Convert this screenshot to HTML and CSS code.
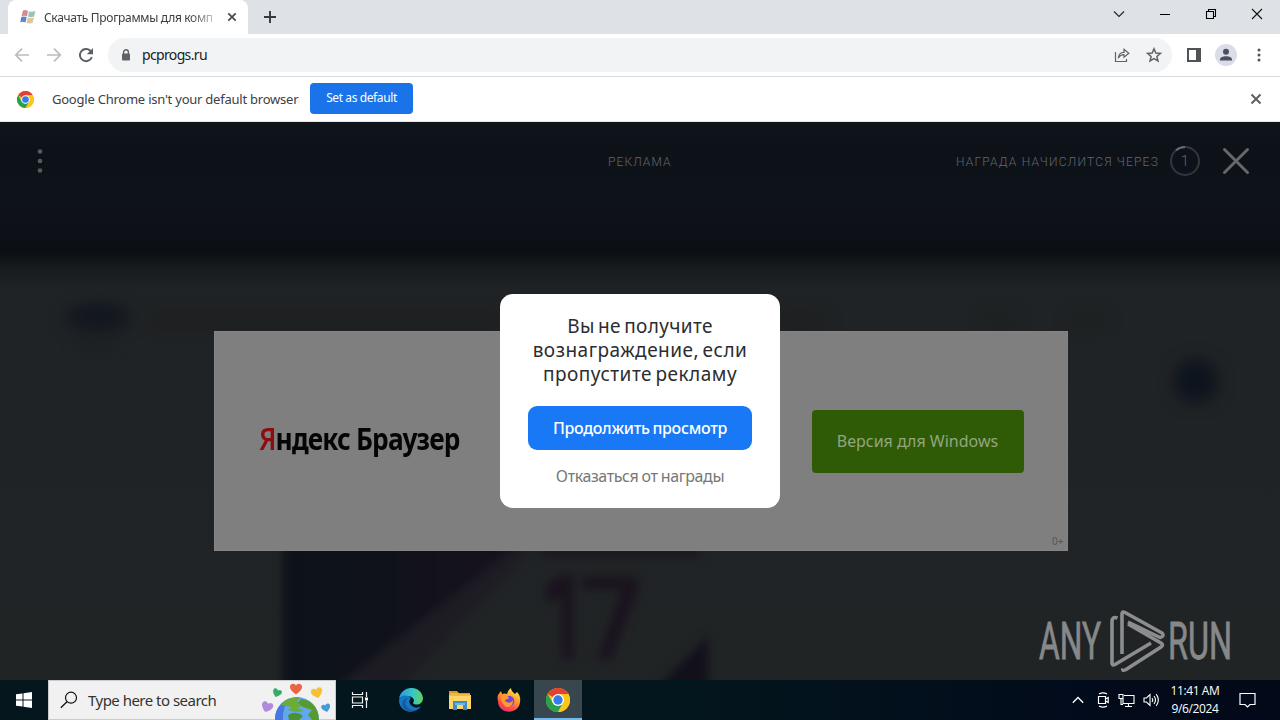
FILE: index.html
```html
<!DOCTYPE html>
<html lang="ru">
<head>
<meta charset="utf-8">
<title>pcprogs.ru</title>
<link rel="stylesheet" href="styles.css">
</head>
<body>
<header class="tabstrip">
  <div class="tab">
    <svg class="favicon" width="16" height="16" viewBox="0 0 16 16"><path d="M3 1.500Q5.500 .5 8 2L7 7.500Q4.500 6 1.500 7.200Z" fill="#d58a92"/><path d="M9 2.300Q12 3.500 15.500 2L14 7.500Q11 9 8 7.500Z" fill="#9cc3b0"/><path d="M1.300 8Q4 7 6.700 8.300L5.500 13.500Q3 12 .3 13.300Z" fill="#5c83cf"/><path d="M7.800 8.500Q11 10 14 8.500L12.500 14Q9 15 6.500 13.700Z" fill="#dfc4a0"/></svg>
    <span class="tab-title">Скачать Программы для комп</span>
    <svg class="tab-close" width="10" height="10" viewBox="0 0 10 10"><path d="M1.300 1.300L8.700 8.700M8.700 1.300L1.300 8.700" stroke="#45494d" stroke-width="1.700"/></svg>
  </div>
  <svg class="new-tab" width="14" height="14" viewBox="0 0 14 14"><path d="M7 1V13M1 7H13" stroke="#35383c" stroke-width="1.900"/></svg>
  <div class="window-buttons">
    <svg width="12" height="12" viewBox="0 0 12 12"><path d="M1 3.500L6 8.500L11 3.500" fill="none" stroke="#222" stroke-width="1.100"/></svg>
    <svg width="12" height="12" viewBox="0 0 12 12"><path d="M1 6.500H11" stroke="#000"/></svg>
    <svg width="12" height="12" viewBox="0 0 12 12"><path d="M1.500 3.500H8.500V10.500H1.500ZM3.500 3V1.500H10.500V8.500H9" fill="none" stroke="#000" stroke-width="1.100"/></svg>
    <svg width="12" height="12" viewBox="0 0 12 12"><path d="M1 1L11 11M11 1L1 11" stroke="#111" stroke-width="1.100"/></svg>
  </div>
</header>

<nav class="toolbar">
  <div class="nav-buttons">
    <svg width="16" height="16" viewBox="0 0 16 16"><path d="M15 8H2M8 1.700L1.700 8L8 14.300" fill="none" stroke="#babcbe" stroke-width="1.700"/></svg>
    <svg width="16" height="16" viewBox="0 0 16 16"><path d="M1 8H14M8 1.700L14.300 8L8 14.300" fill="none" stroke="#babcbe" stroke-width="1.700"/></svg>
    <svg width="16" height="16" viewBox="0 0 16 16"><path d="M13.800 10A6.100 6.100 0 1 1 12.300 3.700L13.500 5" fill="none" stroke="#5b5e61" stroke-width="1.900"/><path d="M15 1V7.200H8.800Z" fill="#5b5e61"/></svg>
  </div>
  <div class="omnibox">
    <svg class="lock" width="10" height="12" viewBox="0 0 10 12"><path d="M2.600 5V3.200a2.400 2.400 0 0 1 4.800 0V5" fill="none" stroke="#5f6368" stroke-width="1.400"/><rect x="1" y="4.500" width="8" height="7" rx="1" fill="#5f6368"/></svg>
    <span class="url">pcprogs.ru</span>
    <svg class="share" width="16" height="16" viewBox="0 0 16 16"><path d="M1.500 5V14.500H12.500V12M4.300 11.300C4.600 7.300 7 5.300 10 5.300V2.300L14.800 6.300L10 10.300V7.700C7.500 7.700 5.700 8.800 4.300 11.300Z" fill="none" stroke="#5f6368" stroke-width="1.200"/></svg>
    <svg width="16" height="16" viewBox="0 0 16 16"><path d="M8 1.800L9.800 6L14.400 6.400L10.900 9.400L12 13.900L8 11.500L4 13.900L5.100 9.400L1.600 6.400L6.200 6Z" fill="none" stroke="#5f6368" stroke-width="1.500"/></svg>
  </div>
  <svg class="panel" width="14" height="14" viewBox="0 0 14 14"><path d="M1 1H13V13H1Z" fill="none" stroke="#505356" stroke-width="2"/><path d="M9 1H14V13H9Z" fill="#505356"/></svg>
  <svg class="profile" width="22" height="22" viewBox="0 0 22 22"><circle cx="11" cy="11" r="11" fill="#dadce8"/><circle cx="11" cy="7.700" r="3" fill="#4b4f63"/><path d="M5 16.500V15.500C5 11 17 11 17 15.500V16.500Z" fill="#4b4f63"/></svg>
  <svg class="menu" width="4" height="14" viewBox="0 0 4 14"><g fill="#4f5256"><circle cx="2" cy="2" r="1.500"/><circle cx="2" cy="7" r="1.500"/><circle cx="2" cy="12" r="1.500"/></g></svg>
</nav>

<section class="infobar">
  <svg width="17" height="17" viewBox="0 0 24 24"><use href="#chrome-logo"/></svg>
  <span class="infobar-text">Google Chrome isn't your default browser</span>
  <button class="set-default"><span>Set as default</span></button>
  <svg class="infobar-close" width="12" height="12" viewBox="0 0 12 12"><path d="M1.500 1.500L10.500 10.500M10.500 1.500L1.500 10.500" stroke="#5b5e61" stroke-width="1.900"/></svg>
</section>

<main class="page">
  <svg class="backdrop" width="1280" height="558" viewBox="0 122 1280 558">
    <defs>
      <linearGradient id="shade" x1="0" y1="122" x2="0" y2="680" gradientUnits="userSpaceOnUse">
        <stop offset="0" stop-color="#10141b"/><stop offset=".04" stop-color="#0d1219"/><stop offset=".15" stop-color="#0e1219"/><stop offset=".235" stop-color="#0c0f15"/><stop offset=".265" stop-color="#191c1e"/><stop offset=".3" stop-color="#202325"/><stop offset="1" stop-color="#212425"/>
      </linearGradient>
      <linearGradient id="cover" x1="0" x2="1"><stop offset="0" stop-color="#0d121a"/><stop offset=".35" stop-color="#0f121a"/><stop offset=".6" stop-color="#14121c"/><stop offset="1" stop-color="#16121c"/></linearGradient>
      <filter id="soft" x="-50%" y="-50%" width="200%" height="200%" color-interpolation-filters="sRGB"><feGaussianBlur stdDeviation="8"/></filter>
      <filter id="soft-small" x="-50%" y="-50%" width="200%" height="200%" color-interpolation-filters="sRGB"><feGaussianBlur stdDeviation="5"/></filter>
    </defs>
    <rect y="122" width="1280" height="558" fill="url(#shade)"/>
    <g filter="url(#soft)">
      <ellipse cx="98" cy="317" rx="33" ry="14" fill="#12171f"/>
      <ellipse cx="95" cy="345" rx="18" ry="6" fill="#1b1f22"/>
      <rect x="150" y="316" width="350" height="8" fill="#1a1c1d"/>
      <rect x="780" y="316" width="45" height="8" fill="#1a1c1d"/>
      <rect x="985" y="316" width="30" height="8" fill="#1a1d1e"/>
      <rect x="1070" y="316" width="35" height="8" fill="#1a1d1e"/>
      <circle cx="1196" cy="381" r="22" fill="#0d141d"/>
    </g>
    <g filter="url(#soft-small)">
      <path d="M283 520H550L335 690H283Z" fill="url(#cover)"/>
      <path d="M525 539H540L400 690H330Z" fill="#1c1923" opacity=".7"/>
      <path d="M546 585L564 574H573V660H562V596L548 604ZM582 577H638V590L611 660H597L622 589H582Z" fill="#1a131f"/>
      <path d="M540 549H700V556H540Z" fill="#17151b"/>
      <path d="M708 636V690H655Z" fill="#12101b"/>
    </g>
  </svg>

  <div class="ad-header">
    <svg width="6" height="24" viewBox="0 0 6 24"><g fill="#56595e"><circle cx="3" cy="2.500" r="2.300"/><circle cx="3" cy="12" r="2.300"/><circle cx="3" cy="21.500" r="2.300"/></g></svg>
    <span class="ad-label">РЕКЛАМА</span>
    <div class="reward">
      <span class="reward-text">НАГРАДА НАЧИСЛИТСЯ ЧЕРЕЗ</span>
      <span class="counter"><svg width="30" height="30" viewBox="0 0 30 30"><circle cx="15" cy="15" r="14" fill="none" stroke="#33373d" stroke-width="2"/><path d="M6 4.300A14 14 0 0 1 15 1" fill="none" stroke="#686b70" stroke-width="2"/></svg><b>1</b></span>
      <svg width="28" height="28" viewBox="0 0 28 28"><path d="M2.500 2.500L25.500 25.500M25.500 2.500L2.500 25.500" stroke="#66686c" stroke-width="3" stroke-linecap="round"/></svg>
    </div>
  </div>

  <div class="ad-area">
    <div class="banner">
      <span class="brand"><i>Я</i>ндекс Браузер</span>
      <span class="download">Версия для Windows</span>
      <span class="age">0+</span>
    </div>
  </div>

  <div class="modal">
    <h1><span>Вы не получите</span><span class="wide">вознаграждение, если</span><span class="wide">пропустите рекламу</span></h1>
    <button class="continue"><span>Продолжить просмотр</span></button>
    <span class="decline">Отказаться от награды</span>
  </div>

  <svg class="watermark" width="204" height="64" viewBox="0 0 204 64">
    <g fill="#87888a" stroke="#87888a" stroke-width=".8" font-family="Roboto, sans-serif" font-size="52">
      <text x="1" y="50" textLength="62" lengthAdjust="spacingAndGlyphs">ANY</text>
      <text x="130" y="50" textLength="64" lengthAdjust="spacingAndGlyphs">RUN</text>
    </g>
    <path d="M79.500 9Q74 7 74 13V54Q74 57 77 55.500L113 34M84 45V5Q84 2 87 3.500L124 24Q127 27 122 28.500L90 13M85 59.500Q84 62.500 88 60.500L123 38Q126 36 123 34L90 15" fill="none" stroke="#8c8d8e" stroke-width="3.600" stroke-linejoin="round"/>
  </svg>
</main>

<footer class="taskbar">
  <div class="start"><svg width="16" height="16" viewBox="0 0 16 16"><path d="M0 2.300L6.500 1.400V7.500H0ZM7.500 1.200L16 0V7.500H7.500ZM0 8.500H6.500V14.600L0 13.700ZM7.500 8.500H16V16L7.500 14.800Z" fill="#fff"/></svg></div>
  <div class="search">
    <svg width="18" height="18" viewBox="0 0 18 18"><circle cx="11" cy="6.700" r="5.500" fill="none" stroke="#111" stroke-width="1.200"/><path d="M7 10.700L.8 16.800" stroke="#111" stroke-width="1.300"/></svg>
    <span class="search-text">Type here to search</span>
    <svg class="earth" width="74" height="39" viewBox="0 0 74 39">
      <defs>
        <path id="heart" d="M0 5.500Q-6.500 1-6-2.500C-5.500-6-1.500-6 0-3.500C1.500-6 5.500-6 6-2.500Q6.500 1 0 5.500Z"/>
        <clipPath id="globe"><circle cx="36" cy="38" r="22"/></clipPath>
      </defs>
      <circle cx="36" cy="38" r="22" fill="#62a8ef"/>
      <g clip-path="url(#globe)"><path d="M13 27Q17 16 29 16Q21 27 22 39H12Z" fill="#4777df"/><path d="M20 24Q25 15 39 16L36 21L43 24L36 27L43 30L35 31L27 29L31 26L25 25Z" fill="#6bac38"/><path d="M40 18Q57 20 58 39H51L47 34L51 29L42 26L37 22Z" fill="#579b2f"/><path d="M27 34Q35 29 42 35L38 39H28Z" fill="#4b9137"/></g>
      <use href="#heart" transform="translate(35 8)" fill="#ec6543"/>
      <use href="#heart" transform="translate(16 12) rotate(20) scale(.75)" fill="#35ac69"/>
      <use href="#heart" transform="translate(56 12) rotate(-15) scale(.95)" fill="#f3c234"/>
      <use href="#heart" transform="translate(6 26) rotate(20) scale(.95)" fill="#b389dc"/>
      <use href="#heart" transform="translate(65 27) rotate(-15) scale(.75)" fill="#429bdc"/>
    </svg>
  </div>
  <div class="apps">
    <span class="app"><svg width="18" height="16" viewBox="0 0 18 16"><path d="M1.500 0V2.500H11.500V0M1.500 16V13.500H11.500V16M1.500 5H11.500V11H1.500ZM15.500 0V5M15.500 9V16" fill="none" stroke="#eef1f2" stroke-width="1.200"/><rect x="14" y="5.500" width="3" height="3" fill="#fff"/></svg></span>
    <span class="app"><svg width="24" height="24" viewBox="0 0 24 24"><defs><linearGradient id="edge-top"><stop offset="0" stop-color="#279be0"/><stop offset=".6" stop-color="#38c7c3"/><stop offset="1" stop-color="#65d259"/></linearGradient></defs><path d="M0 11C2-3 22-4 24 10C24 17 16 18 14 15C17 11 12 7 8 9C4 8 1 9 0 11Z" fill="url(#edge-top)"/><path d="M0 12C1 7 8 6 12 10Q8 14 13 18Q17 21 22 18.500C16 27 0 25 0 12Z" fill="#1478c7"/><path d="M9 10C3 15 9 25 19 21Q12 26 5 21C1 15 4 10 9 10Z" fill="#165c9f"/></svg></span>
    <span class="app"><svg width="22" height="20" viewBox="0 0 22 20"><path d="M0 1H8L10 3H21V18H0Z" fill="#d99b22"/><path d="M0 5H22V19H0Z" fill="#ffd568"/><path d="M1 3H8L10 4H21V6H1Z" fill="#f2b93e"/><path d="M4 11H18V20H14V15H8V20H4Z" fill="#3c8ec7"/><path d="M6 13H16V15H6Z" fill="#72b8dd"/></svg></span>
    <span class="app"><svg width="24" height="24" viewBox="0 0 24 24"><defs><linearGradient id="fox" x1=".8" y1="0" x2=".3" y2="1"><stop offset="0" stop-color="#fff04b"/><stop offset=".45" stop-color="#ff982e"/><stop offset=".75" stop-color="#ff4d45"/><stop offset="1" stop-color="#ef2c73"/></linearGradient></defs><path d="M1 7L4 3L5 6Q8 5 10 6Q11 2 14 0Q14 3 18 6L20 4Q24 8 23 14C22 27 1 27 1 13Q0 10 1 7Z" fill="url(#fox)"/><circle cx="12" cy="13" r="5.300" fill="#7147d8"/><path d="M4 8L10 8Q13 9 11 11Q8 11 8 13Q13 17 16 12Q16 19 10 19Q4 17 4 8Z" fill="#ff9a30"/></svg></span>
    <span class="app active"><svg width="24" height="24" viewBox="0 0 24 24"><g id="chrome-logo"><circle cx="12" cy="12" r="12" fill="#fbc619"/><path d="M12 12L1.600 6A12 12 0 0 1 22.400 6H12Z" fill="#e34133"/><path d="M12 12L6.800 15L1.600 6A12 12 0 0 0 12 24L17.200 15Z" fill="#28a04c"/><path d="M12 6H22.400A12 12 0 0 1 12 24L17.200 15Z" fill="#fbc619"/><circle cx="12" cy="12" r="6" fill="#fff"/><circle cx="12" cy="12" r="4.700" fill="#327de8"/></g></svg></span>
  </div>
  <div class="tray">
    <svg class="chevron" width="12" height="8" viewBox="0 0 12 8"><path d="M.8 6.800L6 1.500L11.200 6.800" fill="none" stroke="#fff" stroke-width="1.300"/></svg>
    <svg width="12" height="16" viewBox="0 0 12 16"><path d="M2 2Q6-.3 10 2M2 14Q6 16.300 10 14M1.500 4.500H8.500V11.500H1.500ZM8.500 7L11.200 5.500V10.500L8.500 9" fill="none" stroke="#fff" stroke-width="1.200"/></svg>
    <svg width="17" height="15" viewBox="0 0 17 15"><path d="M6 2.500H16V10.500H5V6M10.500 10.500V13.500M7 13.500H14M1 1.500H5V5.500H1ZM3 5.500V11.500H5" fill="none" stroke="#fff" stroke-width="1.100"/></svg>
    <svg width="17" height="14" viewBox="0 0 17 14"><path d="M1 5H3.500L7 1.500V12.500L3.500 9H1ZM9 5Q10.500 7 9 9M11 3Q14 7 11 11M13.200 1.200Q17.500 7 13.200 12.800" fill="none" stroke="#fff" stroke-width="1.100"/></svg>
    <div class="clock"><span>11:41 AM</span><span>9/6/2024</span></div>
    <svg class="notice" width="17" height="16" viewBox="0 0 17 16"><path d="M1 1.500H16V12.500H11L8.500 15L6 12.500H1Z" fill="none" stroke="#fff" stroke-width="1.200"/></svg>
  </div>
</footer>
</body>
</html>
```
FILE: styles.css
```css
* { box-sizing: border-box; }
body {
  margin: 0;
  width: 1280px;
  height: 720px;
  overflow: hidden;
  display: flex;
  flex-direction: column;
  font-family: "Noto Sans", "Open Sans", sans-serif;
}
svg { display: block; flex: none; }
button { border: 0; padding: 0; font-family: inherit; }
span { white-space: nowrap; }

.tabstrip { height: 34px; background: #dee1e6; display: flex; align-items: center; }
.tab {
  align-self: stretch;
  width: 240px;
  margin-left: 8px;
  padding: 0 11px 0 12px;
  border-radius: 8px 8px 0 0;
  background: #fff;
  display: flex;
  align-items: center;
}
.tab-title {
  width: 171px;
  margin-left: 8px;
  font-size: 12px;
  letter-spacing: -0.31px;
  color: #3c4043;
  mask-image: linear-gradient(90deg, #000 85%, rgba(0, 0, 0, 0.25) 100%);
}
.tab-close { margin-left: 12px; }
.new-tab { margin-left: 15px; }
.window-buttons { margin-left: auto; margin-right: 17px; margin-bottom: 6px; display: flex; gap: 34px; }

.toolbar { height: 43px; border-bottom: 1px solid #d9dbdd; background: #fff; display: flex; align-items: center; }
.nav-buttons { display: flex; gap: 16px; margin-left: 14px; }
.omnibox {
  width: 1064px;
  height: 34px;
  margin-left: 14px;
  padding: 0 10px 0 13px;
  border-radius: 17px;
  background: #f1f3f4;
  display: flex;
  align-items: center;
}
.url { margin-left: 11px; margin-bottom: 1px; font-size: 14px; letter-spacing: -0.65px; color: #202124; }
.share { margin-left: auto; margin-right: 16px; }
.panel { margin-left: 15px; }
.profile { margin-left: 14px; }
.menu { margin-left: 20px; }

.infobar { height: 45px; border-bottom: 1px solid #e3e7e9; background: #fff; display: flex; align-items: center; padding: 0 18px 0 17px; }
.infobar-text { width: 246px; margin-left: 18px; font-size: 13px; letter-spacing: -0.23px; color: #3c4043; }
.set-default { width: 103px; height: 31px; margin-left: 12px; margin-bottom: 2px; padding-bottom: 1px; border-radius: 4px; background: #1a73e8; color: #fff; font-size: 12px; letter-spacing: -0.4px; }
.infobar-close { margin-left: auto; }

.page { position: relative; height: 558px; background: #212425; }
.backdrop { position: absolute; inset: 0; }
.ad-header { position: relative; height: 78px; padding: 0 30px 0 37px; display: flex; align-items: center; justify-content: space-between; font-family: Roboto, sans-serif; font-weight: 300; font-size: 12px; color: #64676c; }
.ad-label { margin-left: 565px; margin-top: 2px; letter-spacing: 1.1px; }
.reward { margin-left: auto; display: flex; align-items: center; }
.reward-text { margin-top: 2px; letter-spacing: 1.2px; }
.counter { margin: 0 22px 0 11px; display: grid; place-items: center; }
.counter > * { grid-area: 1 / 1; }
.counter b { font-weight: 300; font-size: 14px; }
.ad-area { position: relative; height: 482px; display: flex; align-items: center; justify-content: center; }
.banner { position: relative; width: 854px; height: 220px; margin-left: 1px; padding: 0 43px 0 44px; border: 1px solid #858585; background: #7f7f7f; display: flex; align-items: center; justify-content: space-between; }
.brand { font-size: 30px; font-weight: 700; letter-spacing: -1px; color: #050505; margin-bottom: 5px; transform: scaleX(0.876); transform-origin: left center; }
.brand i { font-style: normal; font-weight: 600; color: #8c0d0d; }
.download { width: 212px; height: 63px; border-radius: 4px; background: #2f5b06; color: #92a67e; font-size: 16px; line-height: 62px; text-align: center; }
.age { position: absolute; right: 3px; bottom: 2px; font-size: 10px; color: #575757; }

.modal { position: absolute; left: 500px; top: 172px; width: 280px; height: 214px; padding: 20px 28px; border-radius: 13px; background: #fff; display: flex; flex-direction: column; align-items: center; }
.modal h1 { margin: 0; display: flex; flex-direction: column; align-items: center; font-size: 19px; line-height: 24px; font-weight: 450; letter-spacing: 0.35px; word-spacing: -2px; color: #2c2d31; }
.modal h1 .wide { letter-spacing: 0.5px; }
.continue { width: 224px; height: 44px; margin-top: 20px; padding-bottom: 1px; border-radius: 9px; background: #1978f5; color: #fff; font-size: 16px; font-weight: 500; letter-spacing: -0.3px; word-spacing: -1px; }
.decline { margin-top: 15px; font-size: 16px; line-height: 22px; letter-spacing: -0.4px; word-spacing: -0.5px; color: #777; }
.watermark { position: absolute; left: 1038px; top: 487px; }

.taskbar { height: 40px; background: linear-gradient(90deg, #05171d 0%, #03151d 55%, #020b1b 85%, #020a19 100%); display: flex; align-items: stretch; }
.start { width: 48px; display: grid; place-items: center; }
.search { width: 288px; background: #f1f1f1; border: 1px solid #c9cccd; display: flex; align-items: center; padding-left: 11px; }
.search-text { margin-left: 10px; font-size: 15px; letter-spacing: -0.52px; color: #333; }
.earth { margin-left: auto; }
.apps { display: flex; }
.app { width: 49px; display: grid; place-items: center; }
.app:nth-child(1) { padding-right: 2px; }
.app:nth-child(2) { padding-left: 2px; }
.app:nth-child(3), .app:nth-child(4) { padding-left: 2px; }
.app.active { width: 48px; margin-left: 2px; padding-top: 2px; background: #38464d; border-bottom: 2px solid #76b9ed; }
.tray { margin-left: auto; padding-right: 24px; display: flex; align-items: center; gap: 9px; }
.chevron { margin-right: 4px; }
.tray svg:nth-child(4) { margin-left: -1px; }
.clock { width: 50px; margin-left: 1px; display: flex; flex-direction: column; align-items: center; color: #fff; font-family: "Open Sans", sans-serif; font-size: 12px; line-height: 18px; letter-spacing: -0.4px; }
.notice { margin-left: 10px; }
```
